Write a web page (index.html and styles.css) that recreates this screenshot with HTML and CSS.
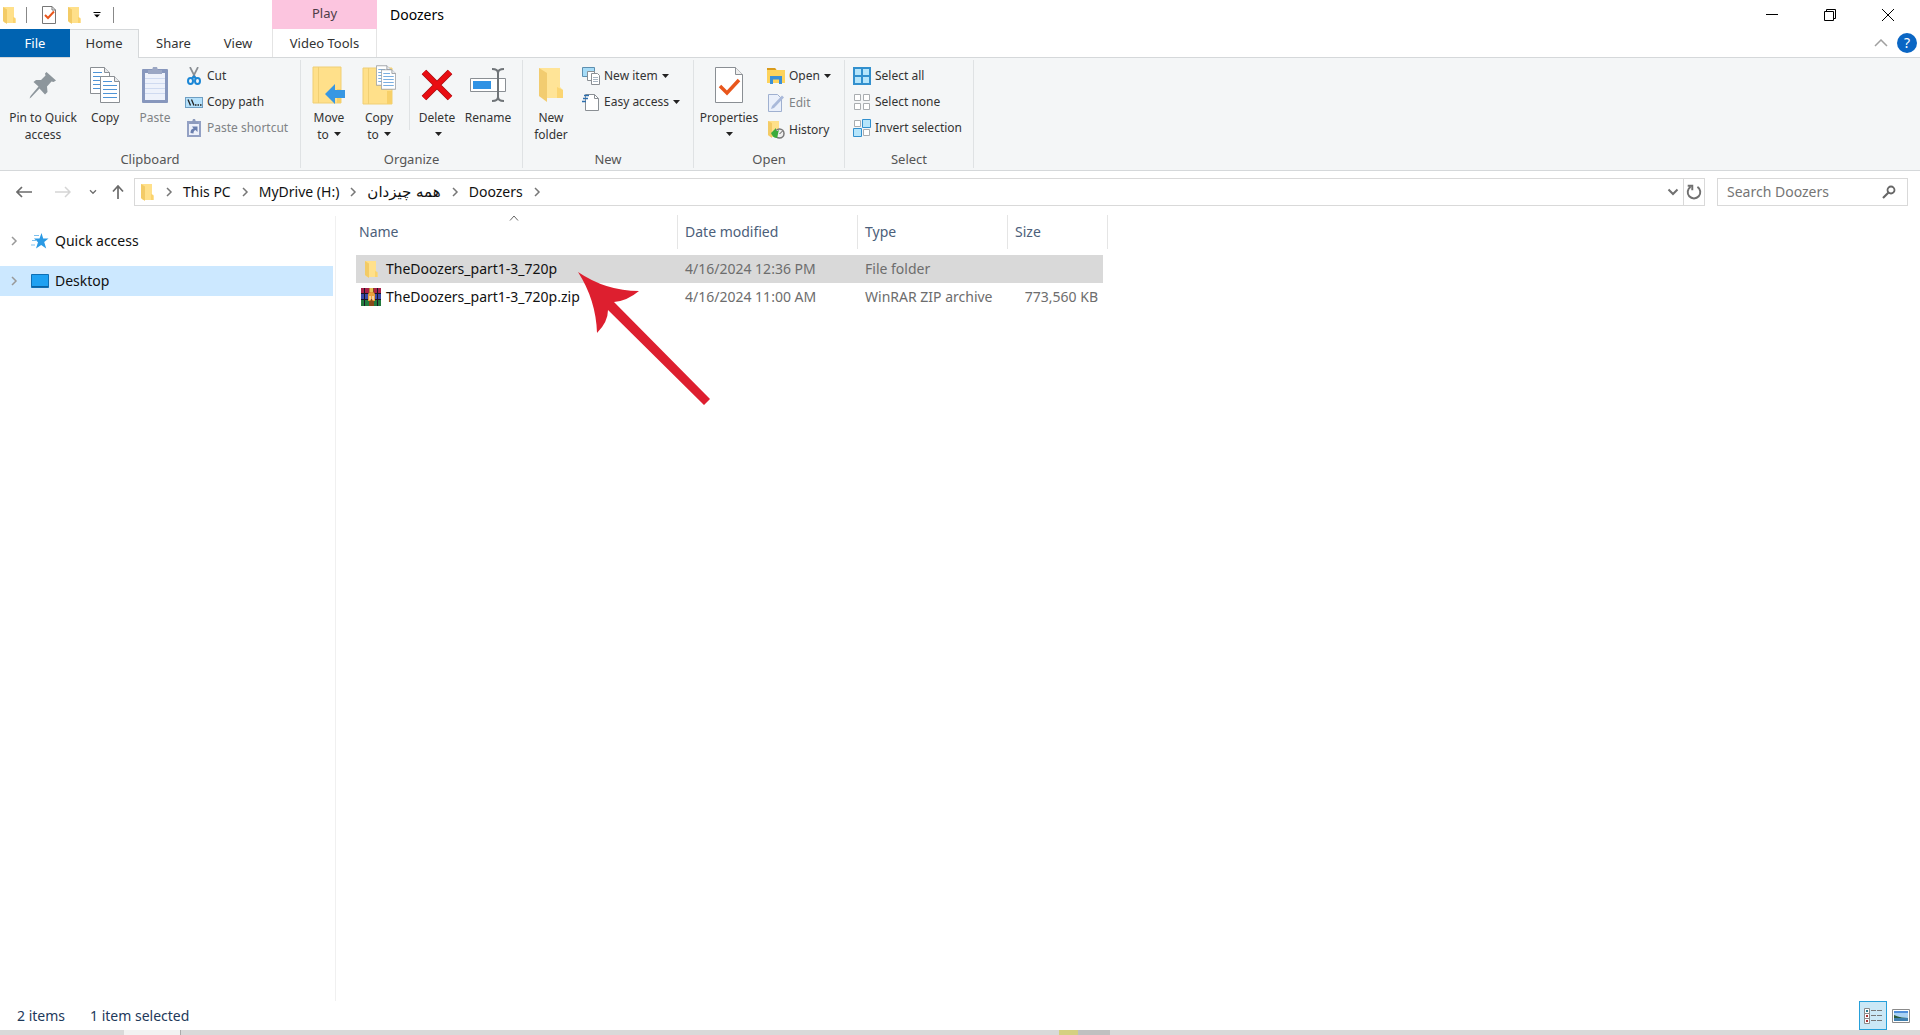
FILE: index.html
```html
<!DOCTYPE html>
<html lang="en">
<head>
<meta charset="utf-8">
<title>Doozers</title>
<link rel="stylesheet" href="styles.css">
</head>
<body>
<svg class="defs" aria-hidden="true">
  <defs>
    <symbol id="folder" viewBox="0 0 14 18"><path d="M1 1h11v11l1.500 1v4H3L1 15z" fill="#ffe08a"/><path d="M1 1l4 2.500V18L1 15z" fill="#f3cb66"/><path d="M11 11l2.500 1v5H11z" fill="#fbd36d"/></symbol>
    <symbol id="chevron" viewBox="0 0 8 10"><path d="M2 1l4 4-4 4" fill="none" stroke="currentColor" stroke-width="1.500"/></symbol>
    <symbol id="caret" viewBox="0 0 7 4"><path d="M0 0h7L3.500 4z" fill="#222"/></symbol>
    <symbol id="down" viewBox="0 0 12 8"><path d="M1.500 1.500L6 6l4.500-4.500" fill="none" stroke="currentColor" stroke-width="2"/></symbol>
    <symbol id="page" viewBox="0 0 20 27"><path d="M.5.500h14l5 5v21H.5z" fill="#fff" stroke="#8a8f94"/><path d="M14.500.500v5h5" fill="#e8eaec" stroke="#8a8f94"/><path d="M3 5.500h9M3 9.500h14M3 13.500h14M3 17.500h14M3 21.500h14" stroke="#4f94d6"/></symbol>
  </defs>
</svg>

<header class="window-head">
  <div class="titlebar">
    <div class="quick-bar">
      <svg class="ico-folder" width="14" height="18"><use href="#folder"/></svg>
      <span class="bar"></span>
      <button class="plain" aria-label="Properties"><svg width="14" height="18" viewBox="0 0 14 18"><path d="M.5.500h9.500l3.500 3.500v13.500H.5z" fill="#fff" stroke="#777"/><path d="M10 .5v3.500h3.500" fill="none" stroke="#777"/><path d="M3 9l3 3 6-6.500" fill="none" stroke="#e8561c" stroke-width="2"/></svg></button>
      <button class="plain" aria-label="New folder"><svg width="14" height="18"><use href="#folder"/></svg></button>
      <button class="plain more" aria-label="Customize"><svg width="8" height="6" viewBox="0 0 8 6"><path d="M.5.500h7" stroke="#000"/><path d="M1 2.500h6L4 5.500z"/></svg></button>
      <span class="bar"></span>
    </div>
    <div class="context-title">Play</div>
    <h1 class="title">Doozers</h1>
    <div class="window-buttons">
      <button aria-label="Minimize"><svg width="12" height="12"><path d="M0 5.500h12" stroke="#000"/></svg></button>
      <button aria-label="Restore"><svg width="12" height="12" fill="none" stroke="#000"><path d="M.5 2.500h9v9h-9zM2.500 2.500v-2h9v9h-2"/></svg></button>
      <button aria-label="Close"><svg width="12" height="12"><path d="M0 0l12 12M12 0L0 12" stroke="#000"/></svg></button>
    </div>
  </div>
  <nav class="tabs">
    <button class="tab file">File</button>
    <button class="tab active">Home</button>
    <button class="tab">Share</button>
    <button class="tab view">View</button>
    <button class="tab context">Video Tools</button>
    <span class="tabs-end">
      <button class="plain" aria-label="Collapse ribbon"><svg width="14" height="8"><path d="M1 7l6-6 6 6" fill="none" stroke="#a0a0a0" stroke-width="1.500"/></svg></button>
      <button class="help" aria-label="Help">?</button>
    </span>
  </nav>
</header>

<section class="ribbon">
  <div class="group clipboard">
    <div class="tools">
      <button class="big pin"><svg width="28" height="28" viewBox="0 0 28 28"><path d="M17.500 1L27 9.500l-2.500 1.500-2-.5-4.500 5 .5 5.500-2.500 2.500-5.500-6L2 26.500.5 27.500 1.500 25l8-9.500L4.500 11 7 9h5l4.500-4.500L16 2.500z" fill="#8d969c"/></svg><span>Pin to Quick<br>access</span></button>
      <button class="big copy"><svg width="32" height="38" viewBox="0 0 32 38"><use href="#page" x="1" y="1" width="20" height="27"/><use href="#page" x="11" y="10" width="20" height="27"/></svg><span>Copy</span></button>
      <button class="big paste off"><svg width="28" height="38" viewBox="0 0 28 38"><rect x="1" y="3" width="26" height="34" rx="1" fill="#8797bd"/><path d="M4 7h20v27H4z" fill="#eef2fb"/><path d="M4 12.500h20M4 17.500h20M4 22.500h20M4 27.500h20" stroke="#cfdaf0"/><path d="M7 4h4l1-3h4l1 3h4v4H7z" fill="#9ba7c4"/></svg><span>Paste</span></button>
      <div class="small-col">
        <button class="small"><svg width="18" height="18" viewBox="0 0 18 18"><path d="M5 0l5.500 11M13 0L7.500 11" stroke="#8a8f94" stroke-width="1.700"/><g fill="none" stroke="#1b87d6" stroke-width="2"><ellipse cx="5.500" cy="14" rx="2.500" ry="3"/><ellipse cx="12.500" cy="14" rx="2.500" ry="3"/><path d="M7 11.500l2-2 2 2"/></g></svg>Cut</button>
        <button class="small"><svg width="18" height="18" viewBox="0 0 18 18"><rect x=".5" y="4.500" width="17" height="10" fill="#b5e1fb" stroke="#6f9fc3"/><path d="M3 6.500l2.500 6M6.500 6.500l2.500 6" stroke="#222" stroke-width="1.300"/><path d="M10 12h1.500M12.500 12H14M15 12h1.500" stroke="#222" stroke-width="1.500"/></svg>Copy path</button>
        <button class="small off"><svg width="18" height="18" viewBox="0 0 18 18"><path d="M2 2h14v16H2z" fill="#93a1c4"/><path d="M4 5h10v11H4z" fill="#edf1fa"/><path d="M5 3h2l1-3h2l1 3h2v2H5z" fill="#8d9bbd"/><path d="M5.500 14c0-3 1-4 3-4.500L7 7.500h5.500V13l-2-2C9 11.500 8.500 12.500 8.500 14.500z" fill="#6a7fae"/></svg>Paste shortcut</button>
      </div>
    </div>
    <h2>Clipboard</h2>
  </div>
  <div class="group organize">
    <div class="tools">
      <button class="big"><svg width="34" height="38" viewBox="0 0 34 38"><path d="M1 1h28v36H1z" fill="#ffe08a"/><path d="M1 1h28v36H1zM6.500 1v36" fill="none" stroke="#f0cf74"/><path d="M25 23h4v14h-4z" fill="#f7d069"/><path d="M13 28L23 18v6h10v8H23v6z" fill="#3797e3"/></svg><span>Move<br>to <svg class="caret" width="7" height="4"><use href="#caret"/></svg></span></button>
      <button class="big"><svg width="34" height="40" viewBox="0 0 34 40"><path d="M1 3h29v36H1z" fill="#ffe08a"/><path d="M1 3h29v36H1zM6.500 3v36" fill="none" stroke="#f0cf74"/><path d="M25 26h5v13h-5z" fill="#f7d069"/><use href="#page" x="14" y="0" width="15" height="21"/><use href="#page" x="19" y="4" width="15" height="21"/></svg><span>Copy<br>to <svg class="caret" width="7" height="4"><use href="#caret"/></svg></span></button>
      <span class="split"></span>
      <button class="big"><svg width="32" height="32" viewBox="0 0 32 32"><path d="M3 3l26 26M29 3L3 29" stroke="#a80d10" stroke-width="6.500"/><path d="M3 3l26 26M29 3L3 29" stroke="#e90d12" stroke-width="5"/></svg><span>Delete<br><svg class="caret" width="7" height="4"><use href="#caret"/></svg></span></button>
      <button class="big rename"><svg width="36" height="34" viewBox="0 0 36 34"><path d="M.5 10.500h35v13H.5z" fill="#fff" stroke="#8a8f94"/><path d="M3 13h18v8H3z" fill="#2f92e4"/><path d="M22 1c4 0 6 1 6 4v24c0 3-2 4-6 4M34 1c-4 0-6 1-6 4v24c0 3 2 4 6 4" fill="none" stroke="#6f7478" stroke-width="2"/></svg><span>Rename</span></button>
    </div>
    <h2>Organize</h2>
  </div>
  <div class="group new">
    <div class="tools">
      <button class="big"><svg width="24" height="36" viewBox="0 0 24 36"><path d="M0 1h21v19l3 3v8H8L0 29z" fill="#ffe497"/><path d="M0 1l8 5v29l-8-6z" fill="#f2cc70"/><path d="M18 20l6 3v8h-6z" fill="#fbd572"/></svg><span>New<br>folder</span></button>
      <div class="small-col">
        <button class="small"><svg width="18" height="18" viewBox="0 0 18 18"><path d="M.5.500h12v9H.5z" fill="#a6dcf7" stroke="#5d8fb0"/><path d="M5.500 4.500h7v9h-7z" fill="#fff" stroke="#8a8f94"/><path d="M9.500 6.500h6l2 2v9h-8z" fill="#fff" stroke="#8a8f94"/><path d="M11 10.500h5M11 12.500h5M11 14.500h5" stroke="#a8b5c2"/></svg>New item <svg class="caret" width="7" height="4"><use href="#caret"/></svg></button>
        <button class="small"><svg width="18" height="18" viewBox="0 0 18 18"><path d="M3.500 1.500h9l4 4v12h-13z" fill="#fff" stroke="#8a8f94"/><path d="M12.500 1.500v4h4" fill="none" stroke="#8a8f94"/><path d="M2 2.500h5M1 5.500h5M0 8.500h4" stroke="#2d6fae" stroke-width="1.500"/></svg>Easy access <svg class="caret" width="7" height="4"><use href="#caret"/></svg></button>
      </div>
    </div>
    <h2>New</h2>
  </div>
  <div class="group open">
    <div class="tools">
      <button class="big properties"><svg width="28" height="36" viewBox="0 0 28 36"><path d="M.5.500h20l7 7v28H.5z" fill="#fff" stroke="#8a8f94"/><path d="M20.500.500v7h7" fill="#eee" stroke="#8a8f94"/><path d="M5 19l7 7 12-13" fill="none" stroke="#e8561c" stroke-width="3.500"/></svg><span>Properties<br><svg class="caret" width="7" height="4"><use href="#caret"/></svg></span></button>
      <div class="small-col wide">
        <button class="small"><svg width="18" height="18" viewBox="0 0 18 18"><path d="M0 1h8l1.500 2H18v13H0z" fill="#fdd35c"/><path d="M0 1h8l1.500 2H0z" fill="#d99b1c"/><path d="M3 17V9h12v8h-3v-4.500H6V17z" fill="#3b8fd6"/></svg>Open <svg class="caret" width="7" height="4"><use href="#caret"/></svg></button>
        <button class="small off"><svg width="18" height="18" viewBox="0 0 18 18"><path d="M1.500.500h9l4 4v13h-13z" fill="#eaf0fb" stroke="#9fb0d0"/><path d="M4 15l1-3L15 1.500l2 2L7 14z" fill="#a9b9da"/></svg>Edit</button>
        <button class="small"><svg width="18" height="18" viewBox="0 0 18 18"><path d="M1 0h11v16H4l-3-2z" fill="#ffe08a"/><path d="M1 0l4 2v15l-4-3z" fill="#f3cb66"/><circle cx="12.500" cy="12.500" r="4.500" fill="#eee" stroke="#777" stroke-width="1.500"/><path d="M12.500 13l3-3" stroke="#555"/><path d="M4 12l5-5v3c2 0 1 0 3-1-1 3-1 5-2 8-3 0-5-2-6-5z" fill="#3bab3b"/></svg>History</button>
      </div>
    </div>
    <h2>Open</h2>
  </div>
  <div class="group select">
    <div class="tools">
      <div class="small-col">
        <button class="small"><svg width="18" height="18" viewBox="0 0 18 18"><path d="M1 1h16v16H1zM9 1v16M1 9h16" fill="#b5e5fb" stroke="#3290ce" stroke-width="2"/></svg>Select all</button>
        <button class="small"><svg width="18" height="18" viewBox="0 0 18 18"><path d="M1.500 1.500h6v6h-6zM10.500 1.500h6v6h-6zM1.500 10.500h6v6h-6zM10.500 10.500h6v6h-6z" fill="#fff" stroke="#a9adb0"/></svg>Select none</button>
        <button class="small"><svg width="18" height="18" viewBox="0 0 18 18"><path d="M1.500 1.500h6v6h-6zM10.500 10.500h6v6h-6z" fill="#fff" stroke="#a9adb0"/><path d="M9.500.500h8v8h-8zM.5 9.500h8v8h-8z" fill="#b5e5fb" stroke="#3290ce"/></svg>Invert selection</button>
      </div>
    </div>
    <h2>Select</h2>
  </div>
</section>

<div class="navbar">
  <div class="nav-buttons">
    <button class="plain" aria-label="Back"><svg width="16" height="12"><path d="M1 6h15M6 1L1 6l5 5" fill="none" stroke="#6b6b6b" stroke-width="1.700"/></svg></button>
    <button class="plain" aria-label="Forward"><svg width="16" height="12"><path d="M0 6h15M10 1l5 5-5 5" fill="none" stroke="#d5d5d5" stroke-width="1.500"/></svg></button>
    <button class="plain narrow" aria-label="Recent"><svg width="8" height="6" viewBox="0 0 12 8"><use href="#down"/></svg></button>
    <button class="plain narrow" aria-label="Up"><svg width="12" height="14"><path d="M6 14V1M1 6.500L6 1l5 5.500" fill="none" stroke="#6b6b6b" stroke-width="1.700"/></svg></button>
  </div>
  <div class="address">
    <svg class="ico-folder" width="14" height="18"><use href="#folder"/></svg>
    <svg class="sep" width="8" height="10"><use href="#chevron"/></svg>
    <a href="#pc">This PC</a>
    <svg class="sep" width="8" height="10"><use href="#chevron"/></svg>
    <a href="#drive">MyDrive (H:)</a>
    <svg class="sep" width="8" height="10"><use href="#chevron"/></svg>
    <a href="#all" class="fa" lang="fa" dir="rtl">همه چیزدان</a>
    <svg class="sep" width="8" height="10"><use href="#chevron"/></svg>
    <a href="#doozers">Doozers</a>
    <svg class="sep" width="8" height="10"><use href="#chevron"/></svg>
    <button class="plain drop" aria-label="Previous locations"><svg width="12" height="8"><use href="#down"/></svg></button>
    <button class="plain refresh" aria-label="Refresh"><svg width="16" height="16" viewBox="0 0 14 14"><path d="M10 2.500a5.500 5.500 0 1 1-6 0M1.500 1.500h4v4" fill="none" stroke="#707070" stroke-width="1.700"/></svg></button>
  </div>
  <label class="search">
    <input type="text" placeholder="Search Doozers" aria-label="Search Doozers">
    <svg width="14" height="14"><circle cx="9" cy="5" r="3.500" fill="none" stroke="#666" stroke-width="1.800"/><path d="M6.500 7.500L1 13" stroke="#666" stroke-width="2.200"/></svg>
  </label>
</div>

<main class="content">
  <aside class="tree">
    <button class="node"><svg class="sep" width="8" height="12" viewBox="0 0 8 10"><use href="#chevron"/></svg><svg width="18" height="18" viewBox="0 0 18 18"><path d="M10.500 1l1.700 5.500h5.300l-4.300 3.500 2 6.500-5-3.500-5.200 3.500 2-6.300L3 6.500h5.500z" fill="#2b9ae4"/><path d="M3 3.500h5M1 8.500h5M0 13h4" stroke="#7cc0ee"/></svg>Quick access</button>
    <button class="node current"><svg class="sep" width="8" height="12" viewBox="0 0 8 10"><use href="#chevron"/></svg><svg width="18" height="18" viewBox="0 0 18 18"><path d="M.5 2.500h17v13H.5z" fill="#1fa1f2" stroke="#0f6fb4"/><path d="M1 14.500h16" stroke="#0b62a3"/></svg>Desktop</button>
  </aside>
  <section class="files">
    <table>
      <colgroup><col class="c-name"><col class="c-date"><col class="c-type"><col class="c-size"></colgroup>
      <thead>
        <tr><th class="sorted">Name<svg class="sort" width="10" height="6"><path d="M1 5.500L5 1l4 4.500" fill="none" stroke="#666"/></svg></th><th>Date modified</th><th>Type</th><th>Size</th></tr>
      </thead>
      <tbody>
        <tr class="picked"><td><span class="name"><svg width="20" height="18" viewBox="-3 0 20 18"><use href="#folder" width="14" height="18"/></svg>TheDoozers_part1-3_720p</span></td><td>4/16/2024 12:36 PM</td><td>File folder</td><td></td></tr>
        <tr><td><span class="name"><svg width="20" height="18" viewBox="0 0 20 18"><path d="M0 0h20v6H0z" fill="#a8224a"/><path d="M0 6h20v6H0z" fill="#3a4aa8"/><path d="M0 12h20v6H0z" fill="#237a3d"/><path d="M0 5.500h20M0 11.500h20M3.500 0v18M16.500 0v18" stroke="#1c1526"/><path d="M8 0h5v18H8z" fill="#8a4a1a"/><path d="M8.500 0h3.500v4H8.500z" fill="#e6c057"/><path d="M7 13V7q0-3 3.500-3T14 7v6h-2.500v-2h-2v2z" fill="#e9a13c"/><path d="M9 12V8M12 12V8" stroke="#fff"/></svg>TheDoozers_part1-3_720p.zip</span></td><td>4/16/2024 11:00 AM</td><td>WinRAR ZIP archive</td><td class="num">773,560 KB</td></tr>
      </tbody>
    </table>
    <svg class="arrow" width="134" height="134" viewBox="0 0 134 134"><path d="M0 0Q28 19 61 19Q49 29 36 30L132 127L126 133L30 38Q30 50 19 61Q18 28 0 0z" fill="#dd1f2f"/></svg>
  </section>
</main>

<footer class="status">
  <span>2 items</span><span>1 item selected</span>
  <div class="views">
    <button class="view-details" aria-label="Details"><svg width="18" height="16" viewBox="0 0 18 16"><path d="M.5.500h5v5h-5zM.5 5.500h5v5h-5zM.5 10.500h5v5h-5z" fill="#fff" stroke="#8a8a8a"/><path d="M2 3h2" stroke="#2b7a8c" stroke-width="2"/><path d="M2 8h2M2 13h2" stroke="#a33" stroke-width="2"/><path d="M7 2.500h5M13 2.500h5M7 7.500h5M13 7.500h5M7 12.500h5M13 12.500h5" stroke="#777"/></svg></button>
    <button class="plain" aria-label="Large icons"><svg width="18" height="14" viewBox="0 0 18 14"><path d="M.5.500h17v13H.5z" fill="#fff" stroke="#8a8a8a"/><path d="M2 2h14v10H2z" fill="#a9d2f5"/><path d="M2 2h14v2H2z" fill="#4f8fdc"/><path d="M2 9h14v3H2z" fill="#3f7fae"/><path d="M2 6q6 3 14 3H2z" fill="#2b5b3b"/></svg></button>
  </div>
</footer>
<div class="taskbar"><span class="t-lead"></span><span class="t-light"></span><span class="t-mid"></span><span class="t-yellow"></span><span class="t-dark"></span></div>
</body>
</html>
```
FILE: styles.css
```css
* { box-sizing: border-box; }
body {
  margin: 0;
  min-height: 100vh;
  display: flex;
  flex-direction: column;
  background: #fff;
  color: #111;
  font: 14px/20px "Noto Sans", "Open Sans", "DejaVu Sans", sans-serif;
}
button { font: inherit; color: inherit; border: 0; background: none; padding: 0; }
svg { flex: none; }
h1, h2 { margin: 0; font-weight: 400; }
.defs { position: absolute; width: 0; height: 0; }
.plain { display: flex; align-items: center; justify-content: center; }

/* title bar */
.titlebar { display: flex; height: 29px; }
.quick-bar { width: 272px; display: flex; align-items: center; padding-left: 2px; }
.quick-bar .bar { width: 1px; height: 16px; background: #888; margin: 0 0 0 10px; }
.quick-bar .plain { margin-left: 11px; }
.quick-bar .bar + .plain { margin-left: 15px; }
.quick-bar .more { margin-left: 12px; }
.quick-bar .bar:last-child { margin-left: 12px; }
.context-title {
  width: 105px;
  background: #fcc5df;
  color: #4c3c46;
  font-size: 13px;
  line-height: 26px;
  text-align: center;
}
.title { font-size: 14px; line-height: 29px; padding-left: 13px; color: #000; }
.window-buttons { margin-left: auto; display: flex; padding-right: 3px; }
.window-buttons button { width: 58px; display: flex; align-items: center; justify-content: center; }

/* tabs */
.tabs { display: flex; height: 29px; border-bottom: 1px solid #d5d8da; font-size: 13px; color: #333; }
.tab { width: 69px; height: 28px; }
.tab.file { width: 70px; background: #0063b1; color: #fff; }
.tab.active { height: 29px; background: #f4f6f7; border: 1px solid #d5d8da; border-width: 1px 1px 0 0; padding-bottom: 2px; }
.tab.view { width: 64px; padding-right: 4px; }
.tab.context { width: 105px; border: 1px solid #e4e4e4; border-width: 0 1px; }
.tabs-end { margin-left: auto; display: flex; align-items: center; gap: 9px; padding-right: 3px; }
.help { width: 20px; height: 20px; border-radius: 50%; background: #0a66c4; color: #fff; font-size: 14px; line-height: 20px; }

/* ribbon */
.ribbon { display: flex; background: #f4f6f7; border-bottom: 1px solid #d5d8da; padding: 2px 0; height: 113px; color: #333; }
.group { display: flex; flex-direction: column; border-right: 1px solid #dfe2e4; }
.group h2 { font-size: 13px; line-height: 18px; text-align: center; color: #555; }
.tools { flex: 1; display: flex; align-items: flex-start; padding-left: 3px; }
.clipboard { width: 301px; }
.organize { width: 222px; }
.new { width: 171px; }
.open { width: 151px; }
.select { width: 129px; }
.clipboard .tools, .select .tools { padding-left: 8px; }
.big { width: 50px; display: grid; grid-template-rows: 49px auto; justify-items: center; align-items: center; font-size: 12px; line-height: 17px; white-space: nowrap; }
.big.pin { width: 70px; }
.big.copy { width: 54px; }
.big.paste { width: 46px; }
.big.rename { width: 52px; }
.big.properties { width: 64px; }
.off { color: #808386; }
.caret { vertical-align: 3px; margin-left: 2px; }
.split { width: 1px; height: 54px; margin: 16px 2px 0 5px; background: #dfe2e4; }
.small-col { display: flex; flex-direction: column; margin: 3px 0 0 6px; }
.clipboard .small-col { margin-left: 7px; }
.select .small-col { margin-left: 0; }
.small-col.wide { gap: 1px; }
.small { display: flex; align-items: center; gap: 4px; height: 26px; font-size: 12px; white-space: nowrap; }
.small .caret { margin: 0; }

/* address row */
.navbar { display: flex; align-items: center; height: 42px; padding: 0 12px 0 0; }
.nav-buttons { width: 134px; display: flex; padding-left: 4px; color: #707070; }
.nav-buttons .plain { width: 39px; }
.nav-buttons .narrow { width: 22px; }
.nav-buttons .narrow:last-child { width: 28px; }
.address { flex: 1; display: flex; align-items: center; height: 28px; border: 1px solid #d9d9d9; padding-left: 5px; }
.address a { color: #111; text-decoration: none; }
.address .sep { margin: 0 10px; color: #777; }
.address .ico-folder { margin-right: 1px; }
.address .fa { font-family: "DejaVu Sans", sans-serif; font-size: 15px; }
.address .drop { margin-left: auto; width: 20px; color: #707070; }
.refresh { width: 21px; height: 26px; border-left: 1px solid #d9d9d9; }
.search { width: 191px; height: 28px; margin-left: 12px; display: flex; align-items: center; border: 1px solid #d9d9d9; padding: 0 11px 0 9px; }
.search input { flex: 1; min-width: 0; border: 0; padding: 0; outline: 0; font: inherit; }
.search input::placeholder { color: #757575; opacity: 1; }

/* body */
.content { flex: 1; display: flex; }
.tree { width: 336px; margin-top: 3px; padding: 10px 2px 0 0; border-right: 1px solid #f0f0f0; display: flex; flex-direction: column; gap: 10px; }
.node { display: flex; align-items: center; height: 30px; padding-left: 10px; color: #111; }
.node .sep { margin-right: 13px; color: #999; }
.node svg + svg { margin-right: 6px; }
.node.current { background: #cce8ff; }
.files { flex: 1; position: relative; padding: 2px 0 0 20px; }
table { width: 752px; table-layout: fixed; border-spacing: 0; }
.c-name { width: 322px; }
.c-date { width: 180px; }
.c-type { width: 150px; }
.c-size { width: 100px; }
th { height: 34px; padding: 0 0 0 7px; text-align: left; font-weight: 400; color: #4c607a; border-right: 1px solid #e5e5e5; }
th.sorted { padding-left: 3px; position: relative; }
.sort { position: absolute; left: 153px; top: 0; }
thead::after { content: ""; display: block; height: 6px; }
td { height: 28px; padding: 0 0 0 7px; color: #6d6d6d; white-space: nowrap; }
td:first-child { padding-left: 5px; color: #111; }
td:last-child { border-right: 5px solid #fff; }
td.num { text-align: right; padding-right: 5px; }
.name { display: flex; align-items: center; gap: 5px; }
.picked td { background: #d9d9d9; }
.arrow { position: absolute; left: 242px; top: 59px; }

/* status bar */
.status { display: flex; align-items: center; height: 29px; padding-left: 17px; gap: 25px; color: #1e395b; }
.views { margin-left: auto; display: flex; align-items: center; gap: 5px; padding-right: 10px; }
.view-details { width: 28px; height: 29px; border: 1px solid #26a0da; background: #cbe8f6; display: flex; align-items: center; justify-content: center; }
.taskbar { display: flex; height: 5px; background: #d9d9d9; }
.t-lead { width: 124px; }
.t-light { width: 57px; background: #f2f2f2; border-right: 1px solid #aaa; }
.t-mid { width: 878px; }
.t-yellow { width: 19px; background: #d5d081; }
.t-dark { width: 32px; background: #c0c0c0; }
```
